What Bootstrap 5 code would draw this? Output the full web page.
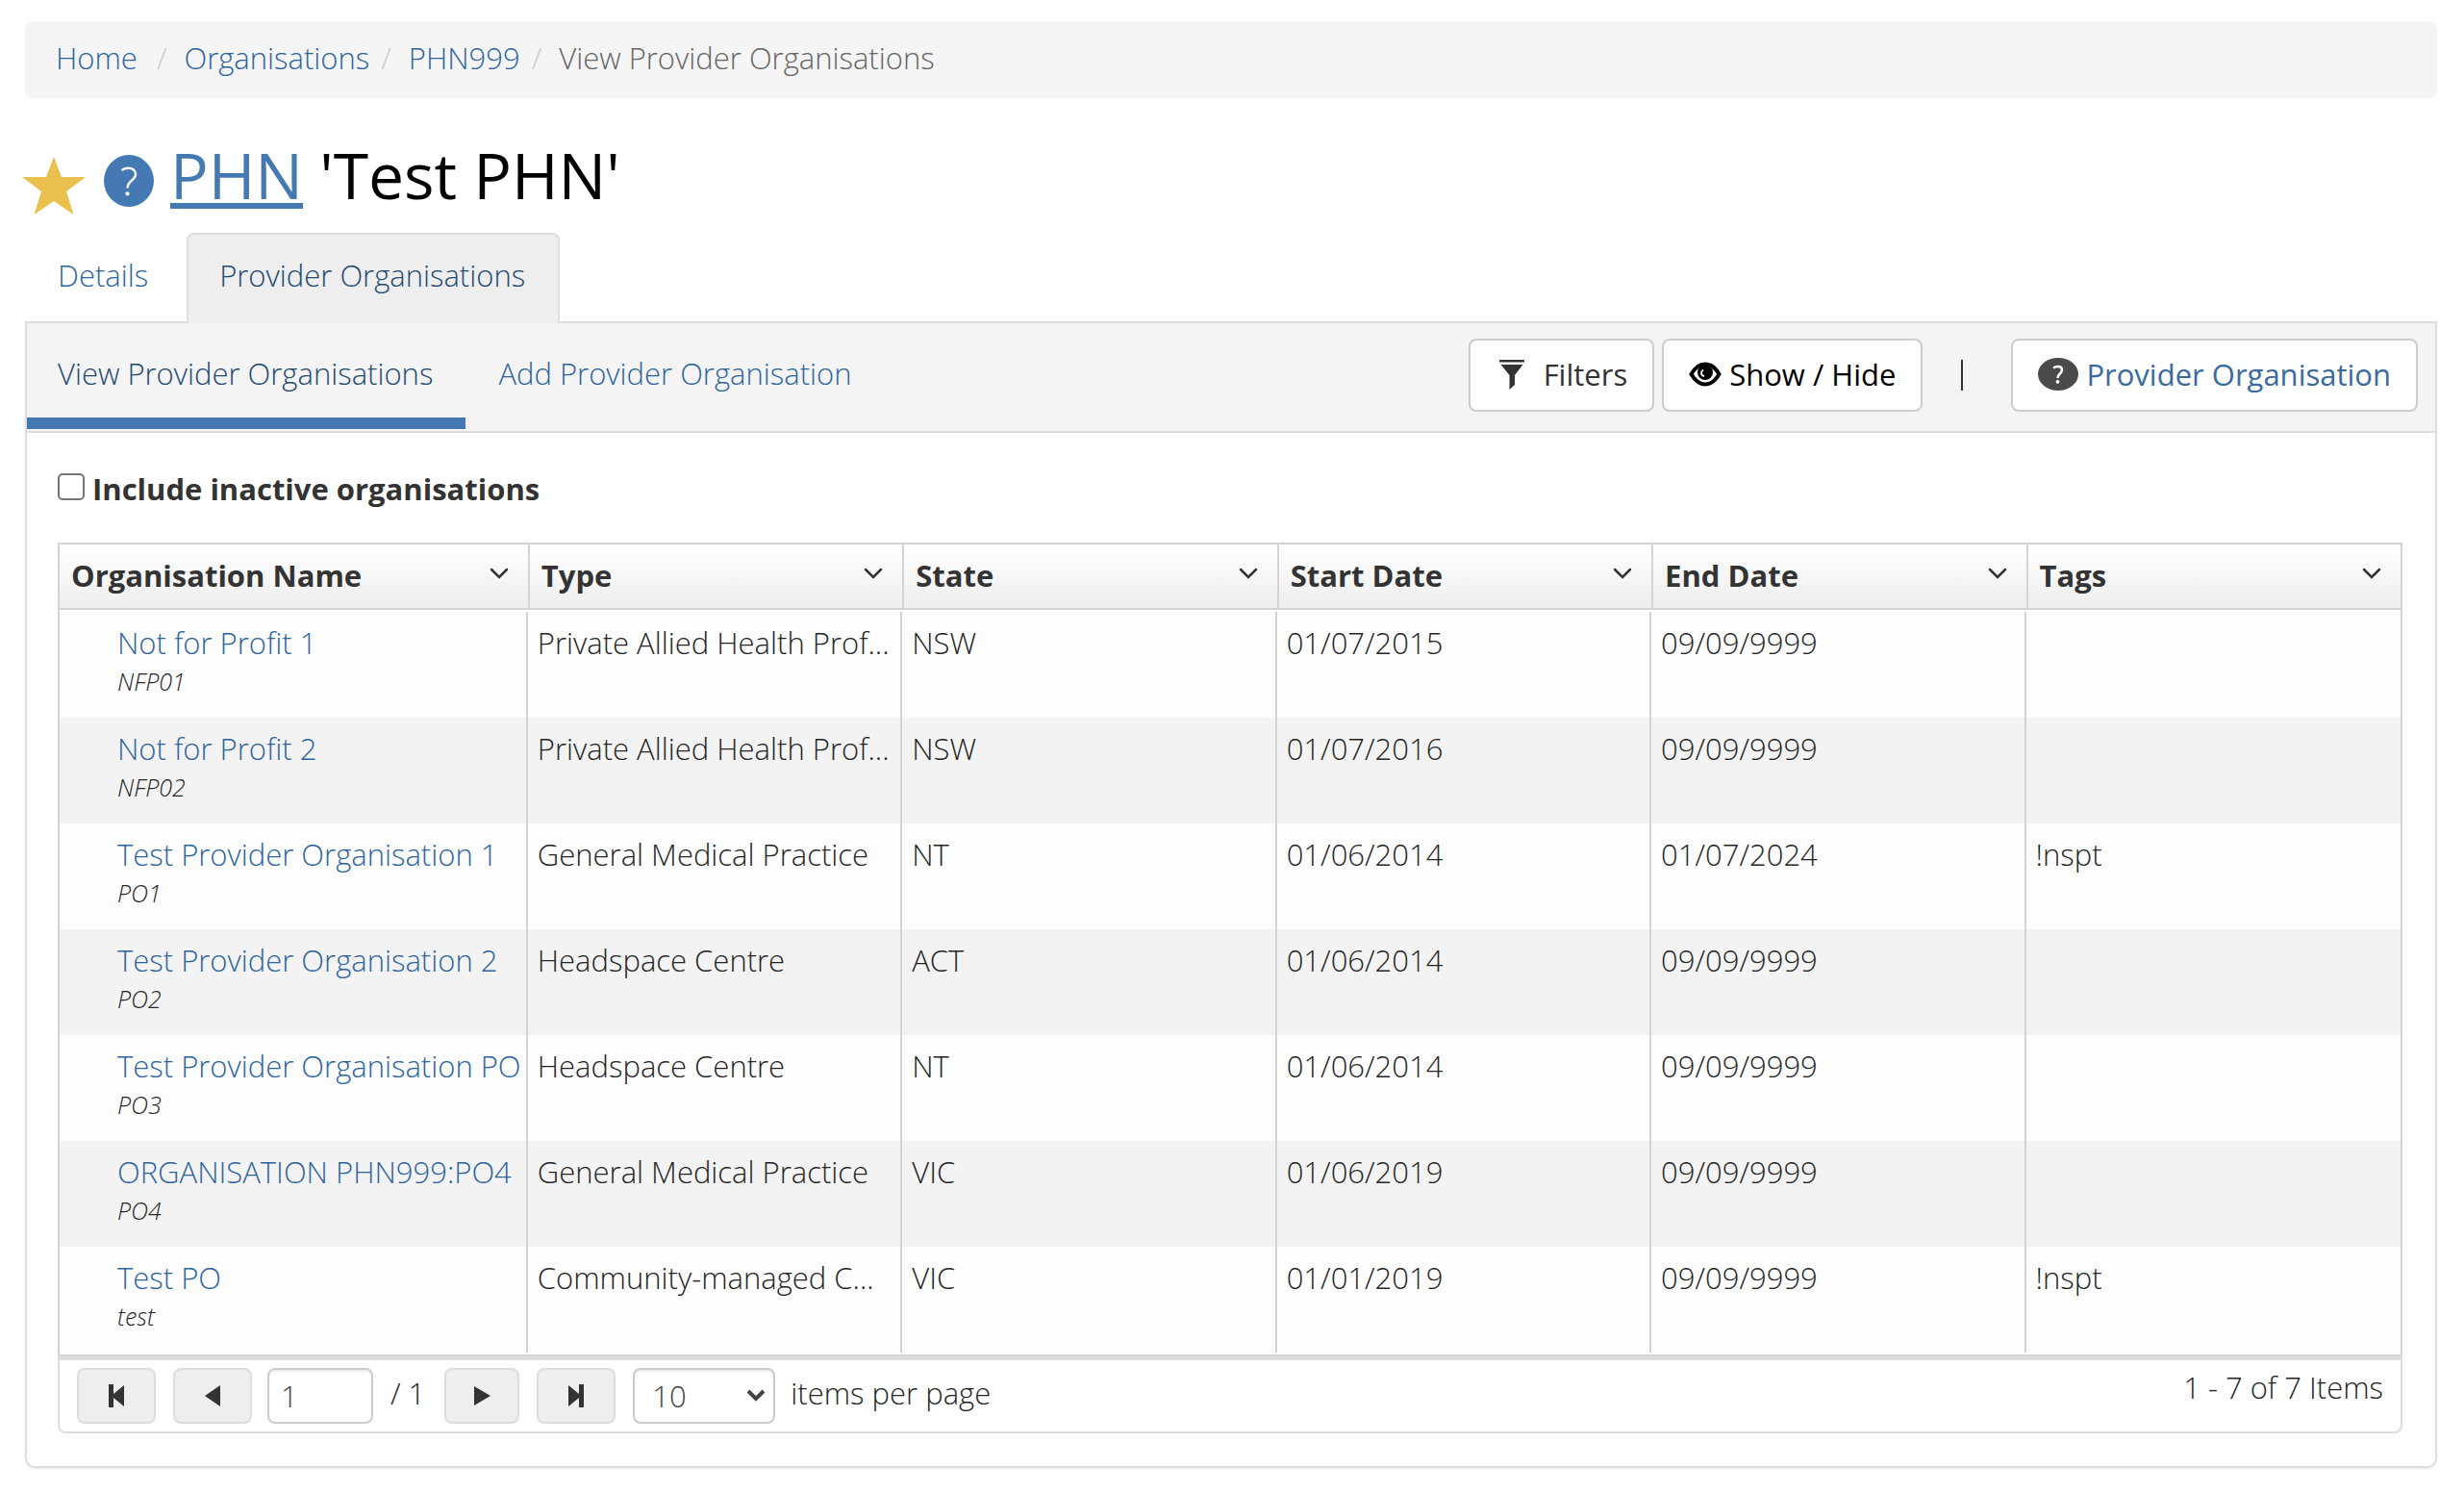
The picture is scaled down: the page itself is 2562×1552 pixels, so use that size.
<!DOCTYPE html>
<html lang="en">
<head>
<meta charset="utf-8">
<meta name="viewport" content="width=device-width, initial-scale=1">
<title>View Provider Organisations</title>
<link href="https://cdn.jsdelivr.net/npm/bootstrap@5.3.0/dist/css/bootstrap.min.css" rel="stylesheet">
<style>
  body { font-family: "Open Sans", "Noto Sans", sans-serif; font-size: 31px; line-height: 44px; font-weight: 300; color: #262626; background: #fff; }
  a { color: #2f659e; text-decoration: none; }
  .page { padding: 22px 28px 24px 26px; }

  .crumbs { --bs-breadcrumb-divider-color: #ccc; background: #f5f5f5; border-radius: 8px; padding: 16px 32px 20px; font-size: 31px; }
  .crumbs .breadcrumb-item + .breadcrumb-item { padding-left: 12px; }
  .crumbs .breadcrumb-item + .breadcrumb-item::before { padding: 0 18px 0 0; }
  .crumbs .active { color: #666; }

  .title-bar { margin: 34px 0 16px; }
  .title-bar h1 { font-size: 66px; line-height: 90px; font-weight: 400; color: #000; }
  .title-bar h1 a { color: #4479b3; text-decoration: underline; text-decoration-thickness: 6px; text-underline-offset: 4px; text-decoration-skip-ink: none; }
  .star { width: 66px; height: 60px; margin: 24px 19px 0 -3px; }
  .help { width: 52px; height: 54px; margin: 14px 17px 0 0; }

  .main-tabs { border-bottom: 0; gap: 4px; }
  .main-tabs .nav-link { border: 2px solid transparent; border-bottom: 0; border-radius: 8px 8px 0 0; padding: 20px 34px 28px 32px; color: #2f659e; margin-bottom: -2px; }
  .main-tabs .nav-link.active { background: #eee; border-color: #ddd; color: #234a73; position: relative; }

  .panel { border: 2px solid #ddd; border-radius: 0 0 10px 10px; box-shadow: 0 2px 2px rgba(0,0,0,.05); }
  .sub-bar { background: #f4f4f4; border-bottom: 2px solid #ddd; padding-right: 18px; }
  .sub-tabs { gap: 2px; }
  .sub-tabs .nav-link { padding: 30px 34px 24px 32px; border-bottom: 12px solid transparent; border-radius: 0; color: #2f659e; margin-bottom: 2px; }
  .sub-tabs .nav-link.active { border-bottom-color: #4479b3; color: #234a73; }
  .tool { font-size: 31px; line-height: 44px; font-weight: 400; background: #fff; border: 2px solid #ccc; border-radius: 8px; padding: 13px 26px 15px; color: #333; }
  .tools { padding-top: 16px; }
  .tool svg { flex: none; }
  .funnel { margin: 0 20px 0 4px; }
  .tool-link { color: #3a6a9e; }
  .bar-rule { width: 2px; height: 32px; background: #333; margin: 22px 50px 0 40px; }

  .panel-main { padding: 36px 34px 34px 32px; }
  .inactive { font-weight: 700; color: #333; margin-bottom: 34px; gap: 8px; }
  .inactive .form-check-input { width: 28px; height: 28px; border: 2px solid #767676; border-radius: 5px; margin: 6px 0 0; }

  .grid-box { border: 2px solid #d4d4d4; padding-bottom: 2px; }
  .grid-table { width: 100%; table-layout: fixed; border-collapse: separate; border-spacing: 0; }
  .grid-table th { font-weight: 700; color: #333; background: linear-gradient(#fff, #eee); border-bottom: 2px solid #d4d4d4; padding: 10px 18px 12px 12px; white-space: nowrap; width: 16%; }
  .grid-table th + th { border-left: 2px solid #d4d4d4; }
  .grid-table th:first-child { width: 20%; }
  .grid-table tbody::before { content: ""; display: block; height: 2px; }
  .grid-table td { height: 110px; padding: 10px 0 0 10px; vertical-align: top; border-right: 2px solid #d4d4d4; white-space: nowrap; overflow: hidden; }
  .grid-table td:first-child { padding-left: 60px; }
  .grid-table td:last-child { border-right: 0; }
  .grid-table tbody tr { background: #fdfdfd; }
  .grid-table tbody tr:nth-child(even) { background: #f3f3f3; }
  .org-key { font-size: 25px; line-height: 36px; font-style: italic; }
  .menu-btn { border: 0; background: none; padding: 0; width: 24px; height: 40px; line-height: 0; }

  .pager { border: 2px solid #ddd; border-top-width: 4px; border-radius: 0 0 8px 8px; padding: 8px 18px; }
  .page-btn { width: 82px; height: 58px; border: 2px solid #ddd; border-radius: 8px; background: #eee; padding: 0; line-height: 0; }
  .step-btn { margin-left: 18px; }
  .next-btn { width: 78px; }
  .page-no, .page-size { height: 58px; border: 2px solid #ccc; border-radius: 8px; font-size: 31px; font-weight: 300; color: #444; background: #fff; box-shadow: inset 0 2px 2px rgba(0,0,0,.075); line-height: 44px; }
  .page-no { width: 110px; padding: 0 12px; margin-left: 16px; }
  .page-total { margin: 4px 20px 0 18px; }
  .page-size { width: 148px; padding: 0 18px; appearance: none; }
  .size-wrap { margin-left: 18px; line-height: 0; }
  .size-wrap svg { position: absolute; right: 10px; top: 22px; pointer-events: none; }
  .size-label { margin: 4px 0 0 16px; }
  .item-count { margin-top: -2px; }
</style>
</head>
<body>
<div class="page">
  <nav aria-label="breadcrumb">
    <ol class="breadcrumb crumbs mb-0">
      <li class="breadcrumb-item"><a href="#" class="me-2">Home</a></li>
      <li class="breadcrumb-item"><a href="#">Organisations</a></li>
      <li class="breadcrumb-item"><a href="#">PHN999</a></li>
      <li class="breadcrumb-item active" aria-current="page">View Provider Organisations</li>
    </ol>
  </nav>

  <div class="title-bar d-flex align-items-center">
    <svg class="star" viewBox="0 0 66 60" aria-hidden="true"><path fill="#eac14f" d="M33 0l8 21h25L46 36l7.500 24L33 46 12.500 60 20 36 0 21h25z"/></svg>
    <svg class="help" viewBox="0 0 52 54" aria-hidden="true"><ellipse cx="26" cy="27" rx="26" ry="27" fill="#4479b3"/><path d="M18.500 16c4-3.500 14-3.500 14.500 4 .3 6-8.500 7-8.500 14.500" fill="none" stroke="#fff" stroke-width="2.400"/><circle cx="24.500" cy="40.300" r="2.100" fill="#fff"/></svg>
    <h1 class="mb-0"><a href="#">PHN</a> 'Test PHN'</h1>
  </div>

  <ul class="nav nav-tabs main-tabs">
    <li class="nav-item"><a class="nav-link" href="#">Details</a></li>
    <li class="nav-item"><a class="nav-link active" href="#" aria-current="page">Provider Organisations</a></li>
  </ul>

  <main class="panel">
    <div class="sub-bar d-flex justify-content-between align-items-start">
      <ul class="nav sub-tabs">
        <li class="nav-item"><a class="nav-link active" href="#">View Provider Organisations</a></li>
        <li class="nav-item"><a class="nav-link" href="#">Add Provider Organisation</a></li>
      </ul>
      <div class="tools d-flex align-items-start">
        <button type="button" class="btn tool d-flex align-items-center me-2">
          <svg class="funnel" width="26" height="32" viewBox="0 0 26 32" fill="#333"><path d="M0 1h26v2.500H0zM1.500 6h23L16 17v10l-5.500 5V17z"/></svg>Filters</button>
        <button type="button" class="btn tool d-flex align-items-center text-black">
          <svg class="me-2" width="34" height="28" viewBox="0 0 34 28"><path d="M2.500 14C7 6 12 3.500 17 3.500S27 6 31.500 14C27 21.500 22 24.500 17 24.500S7 21.500 2.500 14z" fill="#fff" stroke="#000" stroke-width="4"/><circle cx="17" cy="12" r="8" fill="#000"/><path d="M15 9.500c-3 2-2.500 6 1 6.500" fill="none" stroke="#fff" stroke-width="1.800"/></svg>Show / Hide</button>
        <div class="bar-rule"></div>
        <a href="#" class="btn tool d-flex align-items-center">
          <svg class="me-2" width="42" height="34" viewBox="0 0 42 34"><ellipse cx="21" cy="17" rx="21" ry="17" fill="#4a4a4a"/><path d="M16 10.500c3-2 9-2.500 9 2 0 4-4.500 4-4.500 8.500" fill="none" stroke="#fff" stroke-width="2.500"/><circle cx="20.500" cy="24.800" r="1.900" fill="#fff"/></svg><span class="tool-link">Provider Organisation</span></a>
      </div>
    </div>

    <div class="panel-main">
      <div class="inactive d-flex align-items-start">
        <input class="form-check-input" type="checkbox" id="inactive">
        <label for="inactive">Include inactive organisations</label>
      </div>

      <div class="grid-box">
        <table class="grid-table">
          <thead><tr id="heads"></tr></thead>
          <tbody id="rows"></tbody>
        </table>
      </div>
      <div class="pager d-flex align-items-start justify-content-between">
        <div class="d-flex align-items-start">
          <button type="button" class="btn page-btn" aria-label="First page"><svg width="16" height="24" viewBox="0 0 16 24" fill="#333"><path d="M0 0h5v10L16 1v22L5 14v10H0z"/></svg></button>
          <button type="button" class="btn page-btn step-btn" aria-label="Previous page"><svg width="18" height="24" viewBox="0 0 18 24" fill="#333"><path d="M17 1v22L1 12z"/></svg></button>
          <input class="page-no" type="text" value="1" aria-label="Page">
          <span class="page-total">/ 1</span>
          <button type="button" class="btn page-btn next-btn" aria-label="Next page"><svg width="18" height="24" viewBox="0 0 18 24" fill="#333"><path d="M1 2v20l17-10z"/></svg></button>
          <button type="button" class="btn page-btn step-btn" aria-label="Last page"><svg width="16" height="24" viewBox="0 0 16 24" fill="#333"><path d="M16 0h-5v10L0 1v22l11-9v10h5z"/></svg></button>
          <div class="size-wrap position-relative">
            <select class="page-size" id="size"><option>10</option></select>
            <svg width="20" height="14" viewBox="0 0 20 14" fill="none" stroke="#444" stroke-width="4"><path d="M2 2l8 8 8-8"/></svg>
          </div>
          <label for="size" class="size-label">items per page</label>
        </div>
        <div class="item-count">1 - 7 of 7 Items</div>
      </div>
    </div>
  </main>
</div>
<script>
  const heads = ["Organisation Name", "Type", "State", "Start Date", "End Date", "Tags"];
  const rows = [
    ["Not for Profit 1", "NFP01", "Private Allied Health Prof...", "NSW", "01/07/2015", "09/09/9999", ""],
    ["Not for Profit 2", "NFP02", "Private Allied Health Prof...", "NSW", "01/07/2016", "09/09/9999", ""],
    ["Test Provider Organisation 1", "PO1", "General Medical Practice", "NT", "01/06/2014", "01/07/2024", "!nspt"],
    ["Test Provider Organisation 2", "PO2", "Headspace Centre", "ACT", "01/06/2014", "09/09/9999", ""],
    ["Test Provider Organisation PO", "PO3", "Headspace Centre", "NT", "01/06/2014", "09/09/9999", ""],
    ["ORGANISATION PHN999:PO4", "PO4", "General Medical Practice", "VIC", "01/06/2019", "09/09/9999", ""],
    ["Test PO", "test", "Community-managed C...", "VIC", "01/01/2019", "09/09/9999", "!nspt"]
  ];
  document.getElementById("heads").innerHTML = heads.map(h =>
    `<th scope="col"><div class="d-flex justify-content-between align-items-start"><span>${h}</span><button type="button" class="menu-btn" aria-label="${h} menu"><svg width="20" height="12" viewBox="0 0 20 12" fill="none" stroke="#333" stroke-width="2.500" stroke-linecap="round"><path d="M2 2l8 8 8-8"/></svg></button></div></th>`).join("");
  document.getElementById("rows").innerHTML = rows.map(([n, k, ...rest]) =>
    `<tr><td><a href="#">${n}</a><div class="org-key">${k}</div></td>${rest.map(c => `<td>${c}</td>`).join("")}</tr>`).join("");
</script>
<script src="https://cdn.jsdelivr.net/npm/bootstrap@5.3.0/dist/js/bootstrap.bundle.min.js"></script>
</body>
</html>
